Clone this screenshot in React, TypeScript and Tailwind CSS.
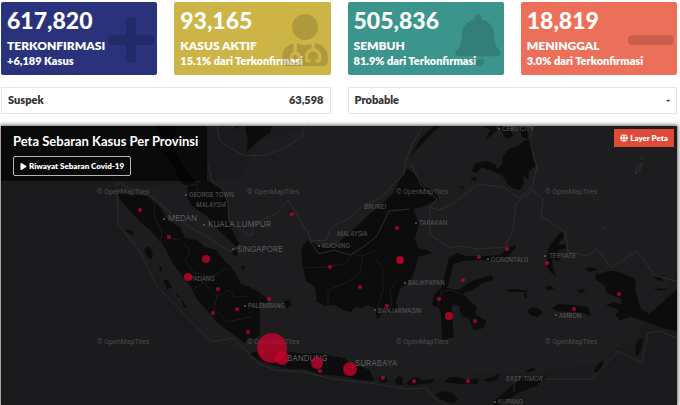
import type { ComponentType } from "react";
import { FaBell, FaGlobe, FaMinus, FaPlay, FaPlus, FaUserMd } from "react-icons/fa";

type Stat = {
  value: string;
  label: string;
  note: string;
  color: string;
  Icon: ComponentType<{ className?: string }>;
};

const stats: Stat[] = [
  { value: "617,820", label: "TERKONFIRMASI", note: "+6,189 Kasus", color: "bg-[#2a327c]", Icon: FaPlus },
  { value: "93,165", label: "KASUS AKTIF", note: "15.1% dari Terkonfirmasi", color: "bg-[#cdb447]", Icon: FaUserMd },
  { value: "505,836", label: "SEMBUH", note: "81.9% dari Terkonfirmasi", color: "bg-[#3c958c]", Icon: FaBell },
  { value: "18,819", label: "MENINGGAL", note: "3.0% dari Terkonfirmasi", color: "bg-[#ec7059]", Icon: FaMinus },
];

const totals = [
  { label: "Suspek", value: "63,598" },
  { label: "Probable", value: "-" },
];

const land = [
  // Sumatra
  "M117 193L124 192L133 195L148 196L155 203L161 208L167 219L180 227L185 238L197 240L205 247L216 250L224 260L231 267L236 274L241 284L250 287L259 295L260 312L260 336L249 340L244 343L232 333L220 325L209 313L196 298L191 287L183 277L172 262L165 248L157 238L150 230L140 222L130 211L121 201Z",
  // Malay peninsula
  "M156 126L162 140L160 150L171 162L177 174L181 183L188 186L187 197L192 206L207 216L214 226L227 238L237 247L239 243L232 230L228 217L228 203L221 188L212 183L206 180L197 183L188 172L182 165L174 148L176 126Z",
  // Indochina
  "M245 126H272L270 133L260 139L246 152L248 141Z",
  "M233 130L240 126H236Z",
  // Borneo
  "M301 253L303 245L308 240L316 245L325 248L335 246L346 236L357 226L372 212L382 204L393 193L397 185L403 174L408 168L413 173L419 179L424 186L437 193L438 199L425 206L413 209L419 223L415 239L418 248L427 250L433 253L418 257L415 270L410 281L400 289L396 302L398 309L389 314L384 311L377 320L375 308L368 305L362 308L355 307L351 312L342 310L335 305L325 306L317 302L315 287L306 281L303 268Z",
  // Java
  "M250 354L259 350L264 352L289 352L304 354L317 353L332 356L344 358L350 363L370 370L374 381L360 380L340 376L318 374L305 369L289 369L270 364L257 359Z",
  // Sulawesi
  "M446 270L449 258L457 253L466 256L481 256L500 255L508 248L515 244L516 248L508 257L497 261L478 260L463 261L453 264L450 279L447 288L458 290L470 282L481 278L492 275L493 280L482 283L473 290L463 293L471 302L477 307L475 314L486 321L484 328L474 330L468 318L461 315L459 306L452 304L452 318L454 337L442 341L441 315L439 308L432 305L434 294L441 288Z",
  // Papua
  "M595 275L608 271L620 272L635 279L636 293L641 309L649 314L661 304L677 289V332L663 328L648 323L638 319L630 317L620 320L615 315L619 310L606 305L613 302L622 304L621 299L606 292L604 285L596 280Z",
  // Halmahera
  "M547 258L549 246L556 238L562 231L564 237L557 245L565 244L566 248L557 251L565 256L557 261L552 259L553 269L557 276L552 274L547 267Z",
  // Seram, Buru, Sula and Obi
  "M552 308L558 304L573 305L588 307L591 316L583 313L570 312L556 311Z",
  "M527 311L532 307L540 309L542 313L537 317L530 315Z",
  "M505 290L512 289L529 291L526 292L527 298L525 298L524 292L510 292Z",
  "M545 287L551 286L554 289L547 290Z",
  "M576 291L581 289L586 291L581 293Z",
  "M584 269L591 267L598 270L590 272Z",
  // Mindanao and Visayas
  "M472 171L475 163L486 161L495 164L497 169L503 163L502 157L509 149L519 145L525 140L532 141L532 156L536 166L529 171L528 180L523 175L524 184L520 190L512 188L507 183L502 175L494 172L482 167L476 173Z",
  "M482 126L490 130L486 139L497 131L495 126Z",
  "M499 126L506 139L513 136L510 127Z",
  "M520 128L527 126L528 139L522 137Z",
  "M471 178L477 177L475 181L471 180Z",
  "M459 186L465 187L464 189Z",
  "M410 156L422 144L434 131L441 126H434L421 138Z",
  // Lesser Sunda islands
  "M378 377L386 377L388 381L381 383Z",
  "M395 380L399 376L403 378L402 385L396 384Z",
  "M406 383L412 378L418 377L421 380L434 379L432 383L420 384L410 386Z",
  "M444 382L449 377L458 377L469 380L480 378L477 384L459 384Z",
  "M435 394L443 391L453 393L458 400L452 403L442 400Z",
  "M483 380L493 377L500 374L497 380L487 382Z",
  "M494 401L505 392L515 382L530 376L546 377L536 386L520 392L507 400L499 405H494Z",
  "M525 371L533 368L537 370L529 372Z",
  "M594 371L598 364L603 361L602 367L597 373Z",
  "M635 350L637 341L643 338L641 350L637 357Z",
  "M653 276L661 277L664 281L657 280Z",
  "M653 288L668 289L660 291Z",
  // West Sumatran islands
  "M125 229L132 231L134 235L128 233Z",
  "M144 249L149 246L153 253L151 260L146 255Z",
  "M159 266L162 267L161 273Z",
  "M163 280L168 280L172 288L167 289Z",
  "M176 293L180 297L177 297Z",
  "M181 299L187 307L184 308Z",
  // Bangka and Belitung
  "M244 287L253 289L261 293L269 301L265 303L256 300L246 292Z",
  "M284 301L290 300L292 305L287 309L283 305Z",
  // Riau
  "M233 251L238 250L237 256L232 255Z",
  "M240 267L246 266L243 270Z",
  "M289 210L294 212L292 216Z",
];

const shelf =
  "M117 193L188 181H238L262 140L310 126H677V270L640 330L600 362L540 372L480 372L420 384L350 375L255 354L211 342L165 288L120 230Z";

const borders = [
  "M115 186L120 183L129 188L152 197L173 215L193 229L211 239L229 251L241 246",
  "M117 188L118 224L138 249L158 287L183 313L211 342L233 338L247 352L259 364L275 370L303 372L333 379L370 383L407 389L426 388L435 399L447 405",
  "M217 126L219 139L224 144L244 156L266 155L282 149L302 137L305 126",
  "M208 166L211 175L212 182L224 190L228 204L229 222L238 228L251 236L254 224L277 213L288 200L309 235L310 240L326 241L331 227L344 221L353 216L363 205L381 198L394 184L404 174L405 163L411 146L423 126",
  "M309 240L319 254L334 250L350 255L363 247L377 236L389 211L409 209",
  "M411 163L421 185L437 199L430 207L438 210L453 204L478 184L503 187L519 198L532 187L537 167L531 146L531 126",
  "M430 208L430 235L451 248L460 246L478 249L505 247L513 230L516 203L533 190L543 200L541 216L565 232L568 252L588 256L597 249L611 268L637 251L655 276L677 281",
  "M545 379L592 379L618 351L642 363L648 333L660 331L677 338",
  "M514 392L514 383L518 380",
];

const provinces = [
  "M154 203L155 220L162 232L160 245",
  "M160 228L170 238L180 240",
  "M184 243L190 252L185 260L193 272L211 277L229 268",
  "M193 273L203 282L193 290",
  "M203 282L217 296L230 290L234 297L247 296",
  "M217 296L214 309L228 322L241 319L251 317",
  "M301 268L327 267L345 264L352 254L363 256L375 250",
  "M328 305L328 290L345 283L359 275L363 257",
  "M377 310L383 290L383 268L375 258",
  "M392 308L390 290L397 281",
  "M284 352L285 369",
  "M318 373L323 360L316 354",
  "M438 307L441 292L451 290L466 296",
  "M186 186L197 184L197 198",
];

const cases = [
  [140, 210, 2], [169, 237, 2], [206, 259, 4], [188, 277, 4], [218, 289, 2],
  [213, 313, 2], [237, 309, 2], [269, 299, 2], [248, 332, 2], [292, 214, 2],
  [397, 228, 2], [400, 260, 4], [330, 267, 2], [360, 287, 2], [387, 306, 2],
  [439, 299, 2], [463, 280, 2], [449, 316, 4], [475, 321, 2], [479, 257, 2],
  [507, 249, 2], [547, 263, 2], [574, 309, 2], [619, 294, 2], [272, 348, 15],
  [262, 352, 2], [282, 358, 7], [317, 363, 6], [320, 371, 2], [350, 369, 7],
  [383, 378, 2], [414, 381, 2], [468, 381, 2],
];

const cities: { name: string; x: number; y: number; major?: boolean; dot?: [number, number] }[] = [
  { name: "MEDAN", x: 168, y: 221, major: true, dot: [164, 219] },
  { name: "KUALA LUMPUR", x: 208, y: 227, major: true, dot: [204, 225] },
  { name: "SINGAPORE", x: 237, y: 252, major: true, dot: [233, 249] },
  { name: "BANDUNG", x: 287, y: 361, major: true },
  { name: "SURABAYA", x: 355, y: 366, major: true },
  { name: "GEORGE TOWN", x: 189, y: 197, dot: [186, 195] },
  { name: "PADANG", x: 190, y: 281 },
  { name: "PALEMBANG", x: 248, y: 308, dot: [245, 306] },
  { name: "KUCHING", x: 322, y: 248, dot: [319, 246] },
  { name: "TARAKAN", x: 419, y: 225, dot: [416, 223] },
  { name: "BALIKPAPAN", x: 408, y: 285, dot: [405, 283] },
  { name: "BANJARMASIN", x: 378, y: 313, dot: [375, 310] },
  { name: "GORONTALO", x: 491, y: 262, dot: [488, 259] },
  { name: "TERNATE", x: 549, y: 258, dot: [545, 256] },
  { name: "AMBON", x: 559, y: 318, dot: [556, 315] },
  { name: "KUPANG", x: 498, y: 404, dot: [495, 402] },
  { name: "CEBU CITY", x: 502, y: 131, dot: [499, 129] },
];

const countries = [
  { name: "MALAYSIA", x: 196, y: 207 },
  { name: "MALAYSIA", x: 337, y: 236 },
  { name: "BRUNEI", x: 364, y: 209 },
  { name: "EAST TIMOR", x: 506, y: 381 },
];

const marks = [
  [97, 194], [247, 194], [396, 194], [545, 194],
  [97, 344], [247, 344], [396, 344], [545, 344],
];

function StatCard({ value, label, note, color, Icon }: Stat) {
  return (
    <section className={`relative h-[73px] overflow-hidden rounded-xs px-1.5 pt-1 text-white ${color}`}>
      <p className="text-[23px] leading-7 font-black">{value}</p>
      <h2 className="mt-1 text-[12px] leading-4 font-extrabold">{label}</h2>
      <p className="text-[11px] leading-[14px] font-extrabold whitespace-nowrap">{note}</p>
      <Icon className="absolute top-3 right-0 size-[52px] text-black/15" />
    </section>
  );
}

function CaseMap() {
  return (
    <svg
      viewBox="1 126 676 279"
      preserveAspectRatio="xMidYMid slice"
      className="block w-full"
      role="img"
      aria-label="Peta Sebaran Kasus Per Provinsi"
    >
      <rect x="1" y="126" width="676" height="279" fill="#1b1b1d" />
      <path d={shelf} fill="#1d1d1f" />
      <g fill="#0c0c0d">
        {land.map((d) => (
          <path key={d} d={d} />
        ))}
      </g>
      <g fill="none" stroke="#2d2d2f" strokeLinejoin="round">
        {borders.map((d) => (
          <path key={d} d={d} />
        ))}
      </g>
      <g fill="none" stroke="#1f1f20" strokeWidth="0.8">
        {provinces.map((d) => (
          <path key={d} d={d} />
        ))}
      </g>
      <g fill="none" stroke="#38383a" strokeWidth="0.7">
        <path d="M635 174L637 167L642 163L640 170ZM642 158L641 160" />
        <path d="M609 196L610 197M606 204L607 205M611 209L612 210M595 227L596 228M602 229L605 227M365 132L366 133M348 149L350 149" />
      </g>
      <g fill="#4b4b4d" className="font-['Roboto',sans-serif] text-[7px]">
        {marks.map(([x, y]) => (
          <text key={`${x}-${y}`} x={x} y={y}>
            © OpenMapTiles
          </text>
        ))}
      </g>
      <g fill="#5c5c5e" className="font-['Inter',sans-serif]">
        {cities.map((c) => (
          <g key={c.name}>
            {c.dot && <circle cx={c.dot[0]} cy={c.dot[1]} r="1" />}
            <text x={c.x} y={c.y} className={c.major ? "text-[8px]" : "text-[6px]"}>
              {c.name}
            </text>
          </g>
        ))}
        {countries.map((c) => (
          <text key={`${c.name}-${c.x}`} x={c.x} y={c.y} className="text-[6px] italic">
            {c.name}
          </text>
        ))}
      </g>
      <g fill="#c3042b" fillOpacity="0.8">
        {cases.map(([x, y, r]) => (
          <circle key={`${x}-${y}`} cx={x} cy={y} r={r} />
        ))}
      </g>
    </svg>
  );
}

export default function App() {
  return (
    <main className="bg-white pt-0.5 pr-[3px] pl-px font-['Lato','Liberation_Sans',sans-serif]">
      <div className="grid grid-cols-4 gap-[17px]">
        {stats.map((s) => (
          <StatCard key={s.label} {...s} />
        ))}
      </div>
      <dl className="mt-3 grid grid-cols-2 gap-[17px]">
        {totals.map((t) => (
          <div
            key={t.label}
            className="flex h-[27px] items-center justify-between border border-[#e6e6e6] px-1.5 text-[11px] font-extrabold text-[#333]"
          >
            <dt>{t.label}</dt>
            <dd>{t.value}</dd>
          </div>
        ))}
      </dl>
      <section className="relative mt-3 overflow-hidden bg-[#1b1b1d] shadow-[0_0_4px_1px_rgba(0,0,0,0.6)]">
        <CaseMap />
        <div className="absolute top-0 left-0 flex h-[55px] w-[206px] flex-col items-start gap-1.5 bg-black/60 px-3 pt-1.5 text-white">
          <h1 className="text-[13px] leading-[18px] font-bold whitespace-nowrap">Peta Sebaran Kasus Per Provinsi</h1>
          <button
            type="button"
            className="flex h-5 items-center gap-0.5 rounded-xs border border-[#b5b5b5] px-1.5 text-[8px] font-extrabold whitespace-nowrap"
          >
            <FaPlay className="size-[7px]" />
            Riwayat Sebaran Covid-19
          </button>
        </div>
        <button
          type="button"
          className="absolute top-[3px] right-[3px] flex h-[18px] items-center gap-0.5 bg-[#de4b39] px-1.5 text-[8px] font-extrabold whitespace-nowrap text-white"
        >
          <FaGlobe className="size-2" />
          Layer Peta
        </button>
      </section>
    </main>
  );
}
